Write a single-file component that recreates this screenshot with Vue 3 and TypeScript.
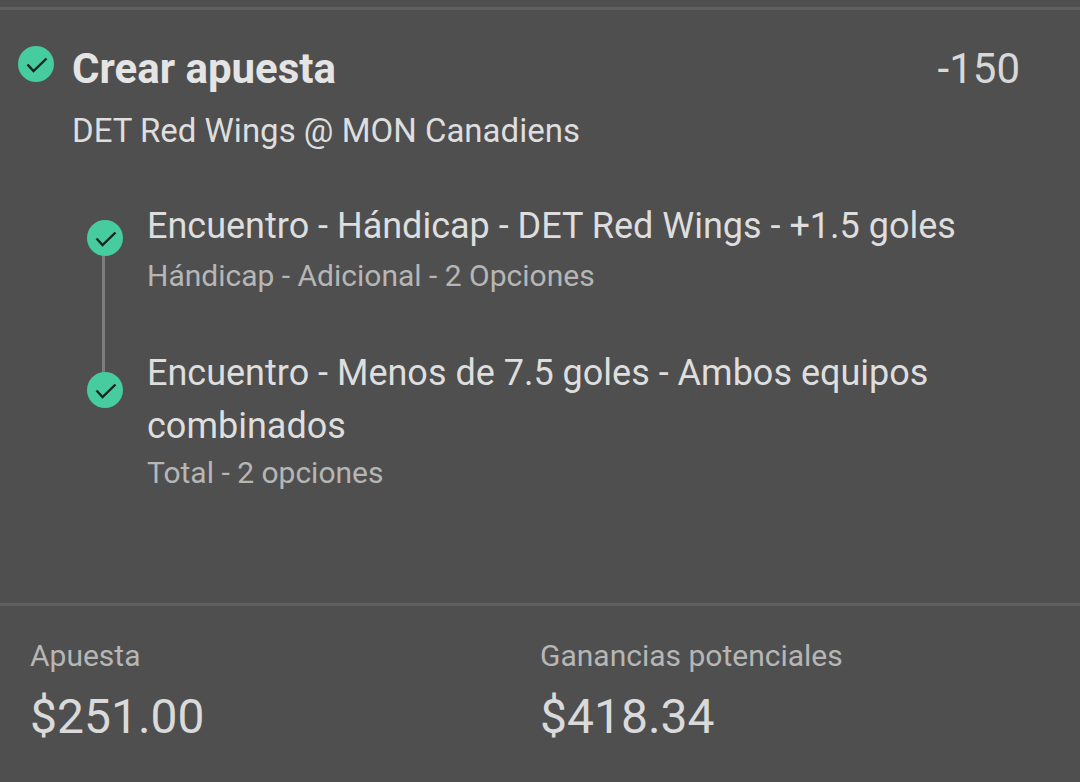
<script setup lang="ts">
interface Leg {
  title: string;
  sub: string;
}

const legs: Leg[] = [
  { title: 'Encuentro - Hándicap - DET Red Wings - +1.5 goles', sub: 'Hándicap - Adicional - 2 Opciones' },
  { title: 'Encuentro - Menos de 7.5 goles - Ambos equipos combinados', sub: 'Total - 2 opciones' },
];
</script>

<template>
  <div class="page">
    <section class="bet">
      <div class="bet__head">
        <span class="check check--top">
          <svg viewBox="0 0 36 36" width="36" height="36"><path d="M9.500 18.500l6 6.500L28.500 12.500" /></svg>
        </span>
        <h1 class="bet__title">Crear apuesta</h1>
        <span class="bet__odds">-150</span>
      </div>
      <p class="bet__game">DET Red Wings @ MON Canadiens</p>
      <ul class="legs">
        <li v-for="leg in legs" :key="leg.title" class="leg">
          <span class="check check--leg">
            <svg viewBox="0 0 36 36" width="36" height="36"><path d="M9.500 18.500l6 6.500L28.500 12.500" /></svg>
          </span>
          <div class="leg__body">
            <div class="leg__title">{{ leg.title }}</div>
            <div class="leg__sub">{{ leg.sub }}</div>
          </div>
        </li>
      </ul>
    </section>
    <footer class="totals">
      <div class="total">
        <div class="total__label">Apuesta</div>
        <div class="total__value">$251.00</div>
      </div>
      <div class="total">
        <div class="total__label">Ganancias potenciales</div>
        <div class="total__value">$418.34</div>
      </div>
    </footer>
  </div>
</template>

<style>
html, body {
  background: #4f4f4f;
}
</style>

<style scoped>
.page {
  width: 1080px;
  height: 782px;
  overflow: hidden;
  box-sizing: border-box;
  background: #4f4f4f;
  padding-top: 7px;
  font-family: Roboto, "Liberation Sans", sans-serif;
  color: #dedede;
}
.bet {
  height: 599px;
  box-sizing: border-box;
  border-top: 3px solid #5f5f5f;
  border-bottom: 3px solid #5f5f5f;
  padding: 36px 60px 0 18px;
}
.bet__head {
  display: flex;
  align-items: flex-start;
}
.check {
  flex: none;
  width: 36px;
  height: 36px;
  border-radius: 50%;
  background: #46cc9f;
}
.check svg {
  display: block;
}
.check path {
  fill: none;
  stroke: #14231e;
  stroke-width: 2.4;
}
.bet__title {
  flex: 1;
  margin: 0 0 0 18px;
  font-size: 42px;
  line-height: 46px;
  font-weight: 700;
  color: #e4e4e4;
}
.bet__odds {
  font-size: 42px;
  line-height: 46px;
  color: #d8d8d8;
}
.bet__game {
  margin: 20px 0 0 54px;
  font-size: 33px;
  line-height: 38px;
  color: #dedede;
}
.legs {
  list-style: none;
  margin: 50px 0 0 69px;
  padding: 0;
}
.leg {
  position: relative;
  display: flex;
  gap: 24px;
  padding-bottom: 54px;
}
.leg:last-child {
  padding-bottom: 0;
}
.leg:first-child::after {
  content: "";
  position: absolute;
  left: 15px;
  top: 56px;
  bottom: -26px;
  width: 3px;
  background: #7c7c7c;
}
.check--leg {
  margin-top: 20px;
}
.leg:last-child .check--leg {
  margin-top: 25px;
}
.leg__body {
  flex: 1;
}
.leg__title {
  font-size: 36px;
  line-height: 53px;
  color: #dedede;
}
.leg__sub {
  margin-top: 6px;
  font-size: 30px;
  line-height: 34px;
  color: #b6b6b6;
}
.leg:last-child .leg__sub {
  margin-top: 3px;
}
.totals {
  display: flex;
  padding: 33px 30px 0;
}
.total {
  width: 510px;
}
.total__label {
  font-size: 30px;
  line-height: 34px;
  color: #b6b6b6;
}
.total__value {
  margin-top: 17px;
  font-size: 48px;
  line-height: 54px;
  color: #dadada;
}
</style>
